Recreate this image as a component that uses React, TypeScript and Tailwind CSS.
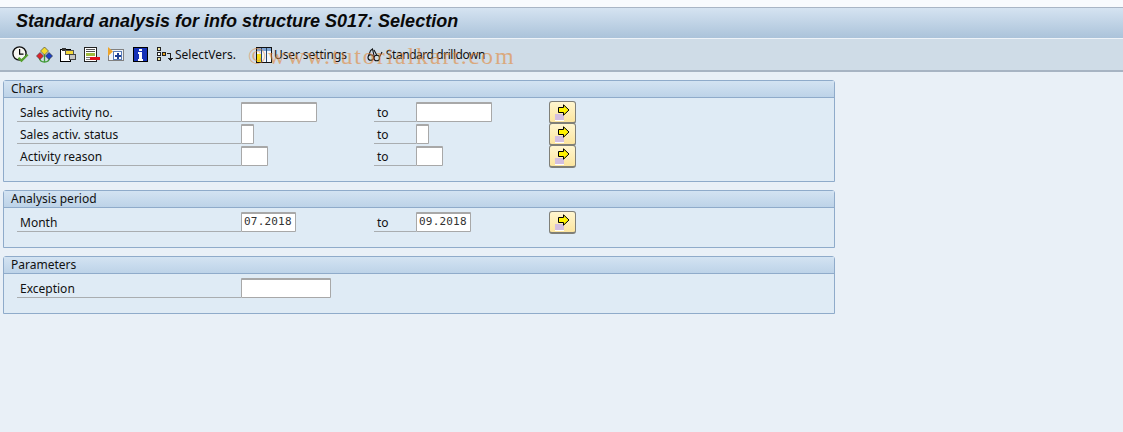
/**
 * Standard analysis selection screen
 */

const uiFont = "font-['Noto_Sans','Liberation_Sans',sans-serif]";

function TimeCheckIcon() {
    return (
        <svg width="17" height="17" viewBox="0 0 17 17">
            <circle cx="7.500" cy="7.500" r="6.600" fill="#f6f6f2" stroke="#111" strokeWidth="1.400" />
            <path d="M7 3h1.200v4.500H11.500v1.200H7z" fill="#000" />
            <path d="M5.500 12.500l1.800-1.500 2.200 2 5.500-5 1.500 1.200-7 7z" fill="#56a02e" />
        </svg>
    );
}

function DiamondsIcon() {
    return (
        <svg width="17" height="17" viewBox="0 0 17 17">
            <path d="M8.500 8v8.500M3.500 12c.3 3 2.800 4 5 4s4.700-1 5-4" fill="none" stroke="#3f9a34" strokeWidth="1.300" />
            <path d="M8.500 1L12.500 5 8.500 9 4.500 5z" fill="#f5dc2a" stroke="#444" strokeWidth=".7" />
            <path d="M4 6.500L7.500 10 4 13.500.5 10z" fill="#e0212b" stroke="#444" strokeWidth=".7" />
            <path d="M13 6.500L16.500 10 13 13.500 9.500 10z" fill="#1a3fc4" stroke="#333" strokeWidth=".7" />
        </svg>
    );
}

function PagesIcon() {
    return (
        <svg width="17" height="17" viewBox="0 0 17 17" shapeRendering="crispEdges">
            <path d="M.500 3.500h10v12H.500z" fill="#fff" stroke="#000" />
            <path d="M2 2h4v3H2z" fill="#333" />
            <path d="M5.500 4.500h8v4h-8z" fill="#f3d83a" stroke="#555" />
            <path d="M9.500 8.500h6v5h-6z" fill="#c4c4c4" stroke="#444" />
        </svg>
    );
}

function ListDeleteIcon() {
    return (
        <svg width="17" height="17" viewBox="0 0 17 17" shapeRendering="crispEdges">
            <path d="M.500 1.500h12v14H.500z" fill="#fff" stroke="#222" />
            <path d="M2 3h9v1H2zM2 5h9v1H2z" fill="#555" />
            <path d="M2 7h9v3H2z" fill="#9fbb3d" />
            <path d="M2 11h4v1H2zM2 13h9v1H2z" fill="#777" />
            <path d="M6 11h10v3H6z" fill="#e0101c" />
        </svg>
    );
}

function AddEntryIcon() {
    return (
        <svg width="17" height="17" viewBox="0 0 17 17" shapeRendering="crispEdges">
            <path d="M.500 3.500h15v11H.500z" fill="#eef3f9" stroke="#808080" />
            <path d="M5.500 5.500h8v8h-8z" fill="#fff" stroke="#5a7db8" />
            <path d="M9 6.500h1.500v2.500H13v1.500h-2.500V13H9v-2.500H6.500V9H9z" fill="#1c3f94" />
            <path d="M0 1l5 4.500L0 10z" fill="#eda42a" shapeRendering="auto" />
        </svg>
    );
}

function InfoIcon() {
    return (
        <svg width="15" height="15" viewBox="0 0 15 15" shapeRendering="crispEdges">
            <path d="M0 0h15v15H0z" fill="#000" />
            <path d="M1 1h13v13H1z" fill="#1632b8" />
            <path d="M6 2h3v2H6zM5 5h4v7h1v2H5v-2h1V7H5z" fill="#fff" />
        </svg>
    );
}

function VersionsIcon() {
    return (
        <svg width="17" height="17" viewBox="0 0 17 17" shapeRendering="crispEdges">
            <path d="M.500 1.500h3v3h-3zM.500 11.500h3v3h-3z" fill="#f2e8a0" stroke="#222" />
            <path d="M.500 6.500h3v3h-3z" fill="#fff" stroke="#222" />
            <path d="M5.500 6.500h3v3h-3z" fill="#e8a21e" stroke="#222" />
            <path d="M10 7h4v6h-1V8h-3zM11 12h5l-2.500 3z" fill="#222" />
        </svg>
    );
}

function SettingsIcon() {
    return (
        <svg width="16" height="16" viewBox="0 0 16 16" shapeRendering="crispEdges">
            <path d="M.500 .500h15v15H.500z" fill="#fff" stroke="#111" />
            <path d="M1 1h14v3H1z" fill="#7fa5d2" />
            <path d="M1 4h4v11H1z" fill="#f7dc1a" />
            <path d="M1 4h4v3H1zM6 4h4v11H6zM11 4h4v11h-4z" fill="#f4f7fb" />
            <path d="M5 1h1v14H5zM10 1h1v14h-1z" fill="#24466e" />
        </svg>
    );
}

function DrilldownIcon() {
    return (
        <svg width="16" height="16" viewBox="0 0 16 16" fill="none" stroke="#111" strokeWidth="1.100">
            <circle cx="3.800" cy="10.500" r="2.800" />
            <circle cx="9.800" cy="11" r="2.800" />
            <path d="M1.500 9L3.500 3.500 5.500 2 7 8.500M7 3l3 5.500M12.500 10L15 5" />
        </svg>
    );
}

function ToolIcon({ children, className }: { children: React.ReactNode; className: string }) {
    return <span className={`flex w-[17px] h-[17px] items-center justify-center ${className}`}>{children}</span>;
}

function MultipleButton({ className = '' }: { className?: string }) {
    return (
        <div className={`w-[27px] h-[23px] rounded-[3px] border border-[#7f7f78] border-b-2 bg-gradient-to-b from-[#fff6cf] to-[#fce59f] ${className}`}>
            <svg width="25" height="20" viewBox="0 0 25 20" className="block">
                <path d="M5 12h9v7H5z" fill="#d3bfe0" />
                <path d="M5 18h9v1H5z" fill="#fff" />
                <path d="M8.500 5.500h5V2.800L19 8l-5.500 5.200V10.500h-5z" fill="#fff200" stroke="#000" />
            </svg>
        </div>
    );
}

function Input({ width, value }: { width: string; value?: string }) {
    return (
        <div className={`${width} h-[20px] bg-white border border-[#a8a8a8] rounded-[1px] border-t-2 flex items-center pl-[2px] font-['DejaVu_Sans_Mono','Liberation_Mono',monospace] text-[11px] tracking-[0.2px] text-[#333]`}>
            {value}
        </div>
    );
}

function FieldRow({ label, from, to, value, valueTo, button = true }: {
    label: string;
    from: string;
    to?: string;
    value?: string;
    valueTo?: string;
    button?: boolean;
}) {
    return (
        <div className="flex h-[22px] items-start">
            <div className="w-[224px] h-[20px] ml-[13px] pl-[3px] border-b border-[#a9adb0] leading-[21px]">{label}</div>
            <div className="w-[133px]">
                <Input width={from} value={value} />
            </div>
            {to && (
                <>
                    <div className="w-[42px] h-[20px] pl-[3px] border-b border-[#a9adb0] leading-[21px]">to</div>
                    <div className="w-[133px]">
                        <Input width={to} value={valueTo} />
                    </div>
                </>
            )}
            {button && <MultipleButton className="-mt-[1px]" />}
        </div>
    );
}

function Group({ title, height, children }: { title: string; height: string; children: React.ReactNode }) {
    return (
        <section className={`w-[832px] ${height} ml-[3px] border border-[#8fabca] rounded-tl-[3px] rounded-tr-[3px] bg-[#dfebf5]`}>
            <div className="h-[17px] pl-[7px] border-b border-[#8fabca] bg-gradient-to-b from-[#d3e3f2] to-[#bdd3e8] leading-[15px]">{title}</div>
            <div className="pt-[4px]">{children}</div>
        </section>
    );
}

export default function App() {
    return (
        <div className={`relative w-[1123px] h-[432px] overflow-hidden bg-[#e9f0f7] text-[12px] text-[#111] ${uiFont}`}>
            {/* Title bar */}
            <div className="h-[7px] bg-[#f8fafd]" />
            <div className="h-[31px] border-t border-[#a9b5c5] bg-gradient-to-b from-[#d5e3f1] to-[#abc3da] pl-[16px] leading-[27px] font-['Liberation_Sans',sans-serif] text-[18px] font-bold italic text-[#0a0a0a]">
                Standard analysis for info structure S017: Selection
            </div>

            {/* Toolbar */}
            <div className="h-[34px] border-t border-[#eef3f8] border-b-2 border-b-[#a7b4c3] bg-[#cfdce7] flex items-center pl-[12px]">
                <ToolIcon className="mr-[7px]"><TimeCheckIcon /></ToolIcon>
                <ToolIcon className="mr-[7px]"><DiamondsIcon /></ToolIcon>
                <ToolIcon className="mr-[7px]"><PagesIcon /></ToolIcon>
                <ToolIcon className="mr-[7px]"><ListDeleteIcon /></ToolIcon>
                <ToolIcon className="mr-[7px]"><AddEntryIcon /></ToolIcon>
                <ToolIcon className="mr-[7px]"><InfoIcon /></ToolIcon>
                <ToolIcon className="ml-[1px] mr-[1px]"><VersionsIcon /></ToolIcon>
                <span>SelectVers.</span>
                <ToolIcon className="ml-[20px] mr-[1px]"><SettingsIcon /></ToolIcon>
                <span className="tracking-[-0.1px]">User settings</span>
                <ToolIcon className="ml-[20px] mr-[2px]"><DrilldownIcon /></ToolIcon>
                <span className="tracking-[-0.45px]">Standard drilldown</span>
            </div>

            {/* Selection groups */}
            <div className="flex flex-col gap-[8px] pt-[8px]">
                <Group title="Chars" height="h-[102px]">
                    <FieldRow label="Sales activity no." from="w-[76px]" to="w-[76px]" />
                    <FieldRow label="Sales activ. status" from="w-[13px]" to="w-[13px]" />
                    <FieldRow label="Activity reason" from="w-[27px]" to="w-[27px]" />
                </Group>
                <Group title="Analysis period" height="h-[58px]">
                    <FieldRow label="Month" from="w-[55px]" to="w-[55px]" value="07.2018" valueTo="09.2018" />
                </Group>
                <Group title="Parameters" height="h-[58px]">
                    <FieldRow label="Exception" from="w-[90px]" button={false} />
                </Group>
            </div>

            {/* Watermark */}
            <div className="absolute left-[248px] top-[38px] font-['Liberation_Serif',serif] text-[24px] tracking-[1.850px] text-[#e2883a] opacity-60 pointer-events-none">
                ©www.tutorialkart.com
            </div>
        </div>
    );
}
